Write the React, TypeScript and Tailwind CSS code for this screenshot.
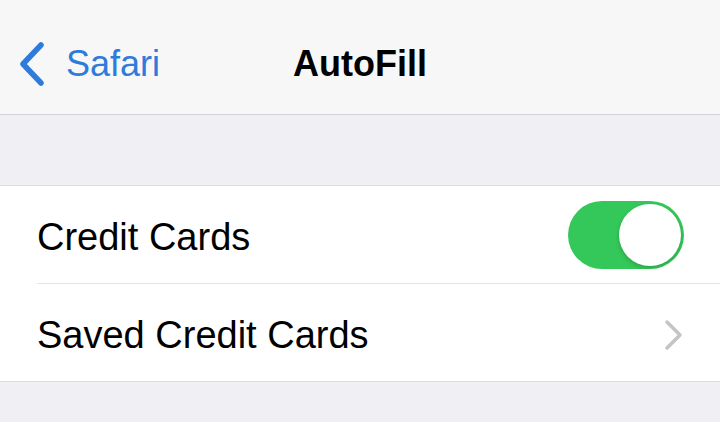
import React, { useState } from 'react';

const font = { fontFamily: '"Liberation Sans", Arial, sans-serif' };

const BackChevron = () => (
  <svg width="28" height="44" viewBox="0 0 28 44" fill="none">
    <path d="M23 3 L5 22 L23 41" stroke="#2f7bdc" strokeWidth="5.5" strokeLinecap="round" strokeLinejoin="round" />
  </svg>
);

const RowChevron = () => (
  <svg width="20" height="32" viewBox="0 0 20 32" fill="none">
    <path d="M3 3 L16 16 L3 29" stroke="#c4c4c8" strokeWidth="3.5" strokeLinecap="round" strokeLinejoin="round" />
  </svg>
);

const Toggle = ({ on, onChange }: { on: boolean; onChange: () => void }) => (
  <button
    onClick={onChange}
    className={`flex h-[68px] w-[116px] items-center rounded-full p-[3px] ${on ? 'justify-end bg-[#34c759]' : 'justify-start bg-[#e9e9eb]'}`}
  >
    <span className="h-[62px] w-[62px] rounded-full bg-white shadow-[0_2px_4px_rgba(0,0,0,0.18)]" />
  </button>
);

export default function App() {
  const [enabled, setEnabled] = useState(true);

  return (
    <div className="flex h-[422px] w-[720px] flex-col overflow-hidden bg-[#efeff4]" style={font}>
      {/* Navigation bar */}
      <header className="relative flex h-[115px] shrink-0 items-center border-b border-[#d4d4d8] bg-[#f7f7f7] px-[18px] pt-[14px]">
        <button className="flex items-center gap-[20px] text-[36px] text-[#2f7bdc]">
          <BackChevron />
          <span className="leading-none">Safari</span>
        </button>
        <h1 className="absolute left-1/2 -translate-x-1/2 text-[36px] font-bold leading-none text-black">AutoFill</h1>
      </header>

      <div className="h-[70px] shrink-0" />

      {/* Settings group */}
      <section className="shrink-0 border-y border-[#dcdce0] bg-white pl-[37px]">
        <div className="flex h-[98px] items-center justify-between border-b border-[#e2e2e6] pr-[36px]">
          <span className="pt-[6px] text-[38px] text-black">Credit Cards</span>
          <Toggle on={enabled} onChange={() => setEnabled(!enabled)} />
        </div>
        <div className="flex h-[97px] items-center justify-between pr-[36px]">
          <span className="pt-[6px] text-[38px] text-black">Saved Credit Cards</span>
          <span className="pt-[4px]">
            <RowChevron />
          </span>
        </div>
      </section>
    </div>
  );
}
